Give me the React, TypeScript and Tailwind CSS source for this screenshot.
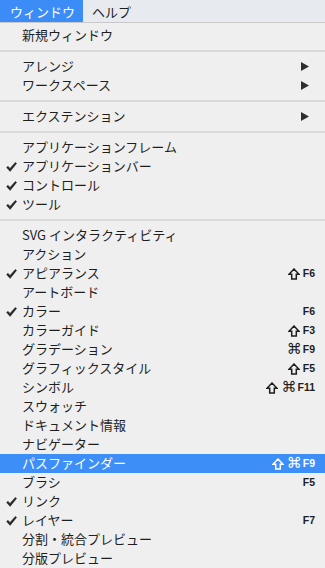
import React from 'react';

type Item =
  | { kind: 'sep' }
  | {
      kind: 'item';
      label: string;
      checked?: boolean;
      submenu?: boolean;
      shortcut?: string[];
      active?: boolean;
    };

const ITEMS: Item[] = [
  { kind: 'item', label: '新規ウィンドウ' },
  { kind: 'sep' },
  { kind: 'item', label: 'アレンジ', submenu: true },
  { kind: 'item', label: 'ワークスペース', submenu: true },
  { kind: 'sep' },
  { kind: 'item', label: 'エクステンション', submenu: true },
  { kind: 'sep' },
  { kind: 'item', label: 'アプリケーションフレーム' },
  { kind: 'item', label: 'アプリケーションバー', checked: true },
  { kind: 'item', label: 'コントロール', checked: true },
  { kind: 'item', label: 'ツール', checked: true },
  { kind: 'sep' },
  { kind: 'item', label: 'SVG インタラクティビティ' },
  { kind: 'item', label: 'アクション' },
  { kind: 'item', label: 'アピアランス', checked: true, shortcut: ['shift', 'F6'] },
  { kind: 'item', label: 'アートボード' },
  { kind: 'item', label: 'カラー', checked: true, shortcut: ['F6'] },
  { kind: 'item', label: 'カラーガイド', shortcut: ['shift', 'F3'] },
  { kind: 'item', label: 'グラデーション', shortcut: ['cmd', 'F9'] },
  { kind: 'item', label: 'グラフィックスタイル', shortcut: ['shift', 'F5'] },
  { kind: 'item', label: 'シンボル', shortcut: ['shift', 'cmd', 'F11'] },
  { kind: 'item', label: 'スウォッチ' },
  { kind: 'item', label: 'ドキュメント情報' },
  { kind: 'item', label: 'ナビゲーター' },
  { kind: 'item', label: 'パスファインダー', shortcut: ['shift', 'cmd', 'F9'], active: true },
  { kind: 'item', label: 'ブラシ', shortcut: ['F5'] },
  { kind: 'item', label: 'リンク', checked: true },
  { kind: 'item', label: 'レイヤー', checked: true, shortcut: ['F7'] },
  { kind: 'item', label: '分割・統合プレビュー' },
  { kind: 'item', label: '分版プレビュー' },
];

const Check: React.FC<{ active?: boolean }> = ({ active }) => (
  <svg width="11" height="10" viewBox="0 0 11 10" className="block">
    <path
      d="M0.6 5.6 L2 4.3 L4 6.4 L9.3 0.4 L10.6 1.4 L4.1 9.4 Z"
      fill={active ? '#fff' : '#262626'}
      stroke={active ? '#fff' : '#262626'}
      strokeWidth="0.5"
      strokeLinejoin="round"
    />
  </svg>
);

const Arrow: React.FC = () => (
  <svg width="8" height="9" viewBox="0 0 8 9" className="block">
    <path d="M0 0 L8 4.5 L0 9 Z" fill="#2e2e2e" />
  </svg>
);

const Shift: React.FC<{ color: string }> = ({ color }) => (
  <svg width="12" height="12" viewBox="0 0 12 12" className="block">
    <path
      d="M6 1 L11 6.2 L8.3 6.2 L8.3 11 L3.7 11 L3.7 6.2 L1 6.2 Z"
      fill="none"
      stroke={color}
      strokeWidth="1.5"
      strokeLinejoin="miter"
    />
  </svg>
);

const Shortcut: React.FC<{ keys: string[]; active?: boolean }> = ({ keys, active }) => (
  <div className="flex items-center gap-[1px] font-['Liberation_Sans',sans-serif] text-[10.5px] font-bold">
    {keys.map((k, i) => {
      if (k === 'shift') {
        return (
          <span key={i} className="mr-[2px]">
            <Shift color={active ? '#fff' : '#1e1e1e'} />
          </span>
        );
      }
      if (k === 'cmd') {
        return (
          <span key={i} className="font-['DejaVu_Sans',sans-serif] text-[15px] font-normal leading-none">
            ⌘
          </span>
        );
      }
      return (
        <span key={i} className="leading-none">
          {k}
        </span>
      );
    })}
  </div>
);

const App: React.FC = () => {
  return (
    <div className="w-[325px] h-[568px] overflow-hidden bg-[#efefef] font-['Noto_Sans_CJK_JP','Liberation_Sans',sans-serif] text-[13px] text-[#1e1e1e]">
      {/* Menu bar */}
      <div className="h-[22px] flex bg-[#e7eaef]">
        <div className="w-[83px] bg-[#3b8cf6] text-white flex items-center pl-[10px] leading-none">ウィンドウ</div>
        <div className="flex items-center pl-[9px] leading-none">ヘルプ</div>
      </div>

      {/* Dropdown */}
      <div className="border-t border-[#c9c9c9] pt-[3px]">
        {ITEMS.map((item, i) => {
          if (item.kind === 'sep') {
            return (
              <div key={i} className="h-[12px] flex items-center">
                <div className="w-full h-[2px] bg-[#dadada]" />
              </div>
            );
          }
          return (
            <div
              key={i}
              className={`h-[19px] flex items-center pr-[10px] ${item.active ? 'bg-[#3d8ef6] text-white' : ''}`}
            >
              <div className="w-[22px] flex justify-center pl-[1px]">
                {item.checked && <Check active={item.active} />}
              </div>
              <div className="flex-1 leading-none whitespace-nowrap -mt-[2px]">{item.label}</div>
              {item.submenu && (
                <div className="pr-[6px]">
                  <Arrow />
                </div>
              )}
              {item.shortcut && <Shortcut keys={item.shortcut} active={item.active} />}
            </div>
          );
        })}
      </div>
    </div>
  );
};

export default App;
